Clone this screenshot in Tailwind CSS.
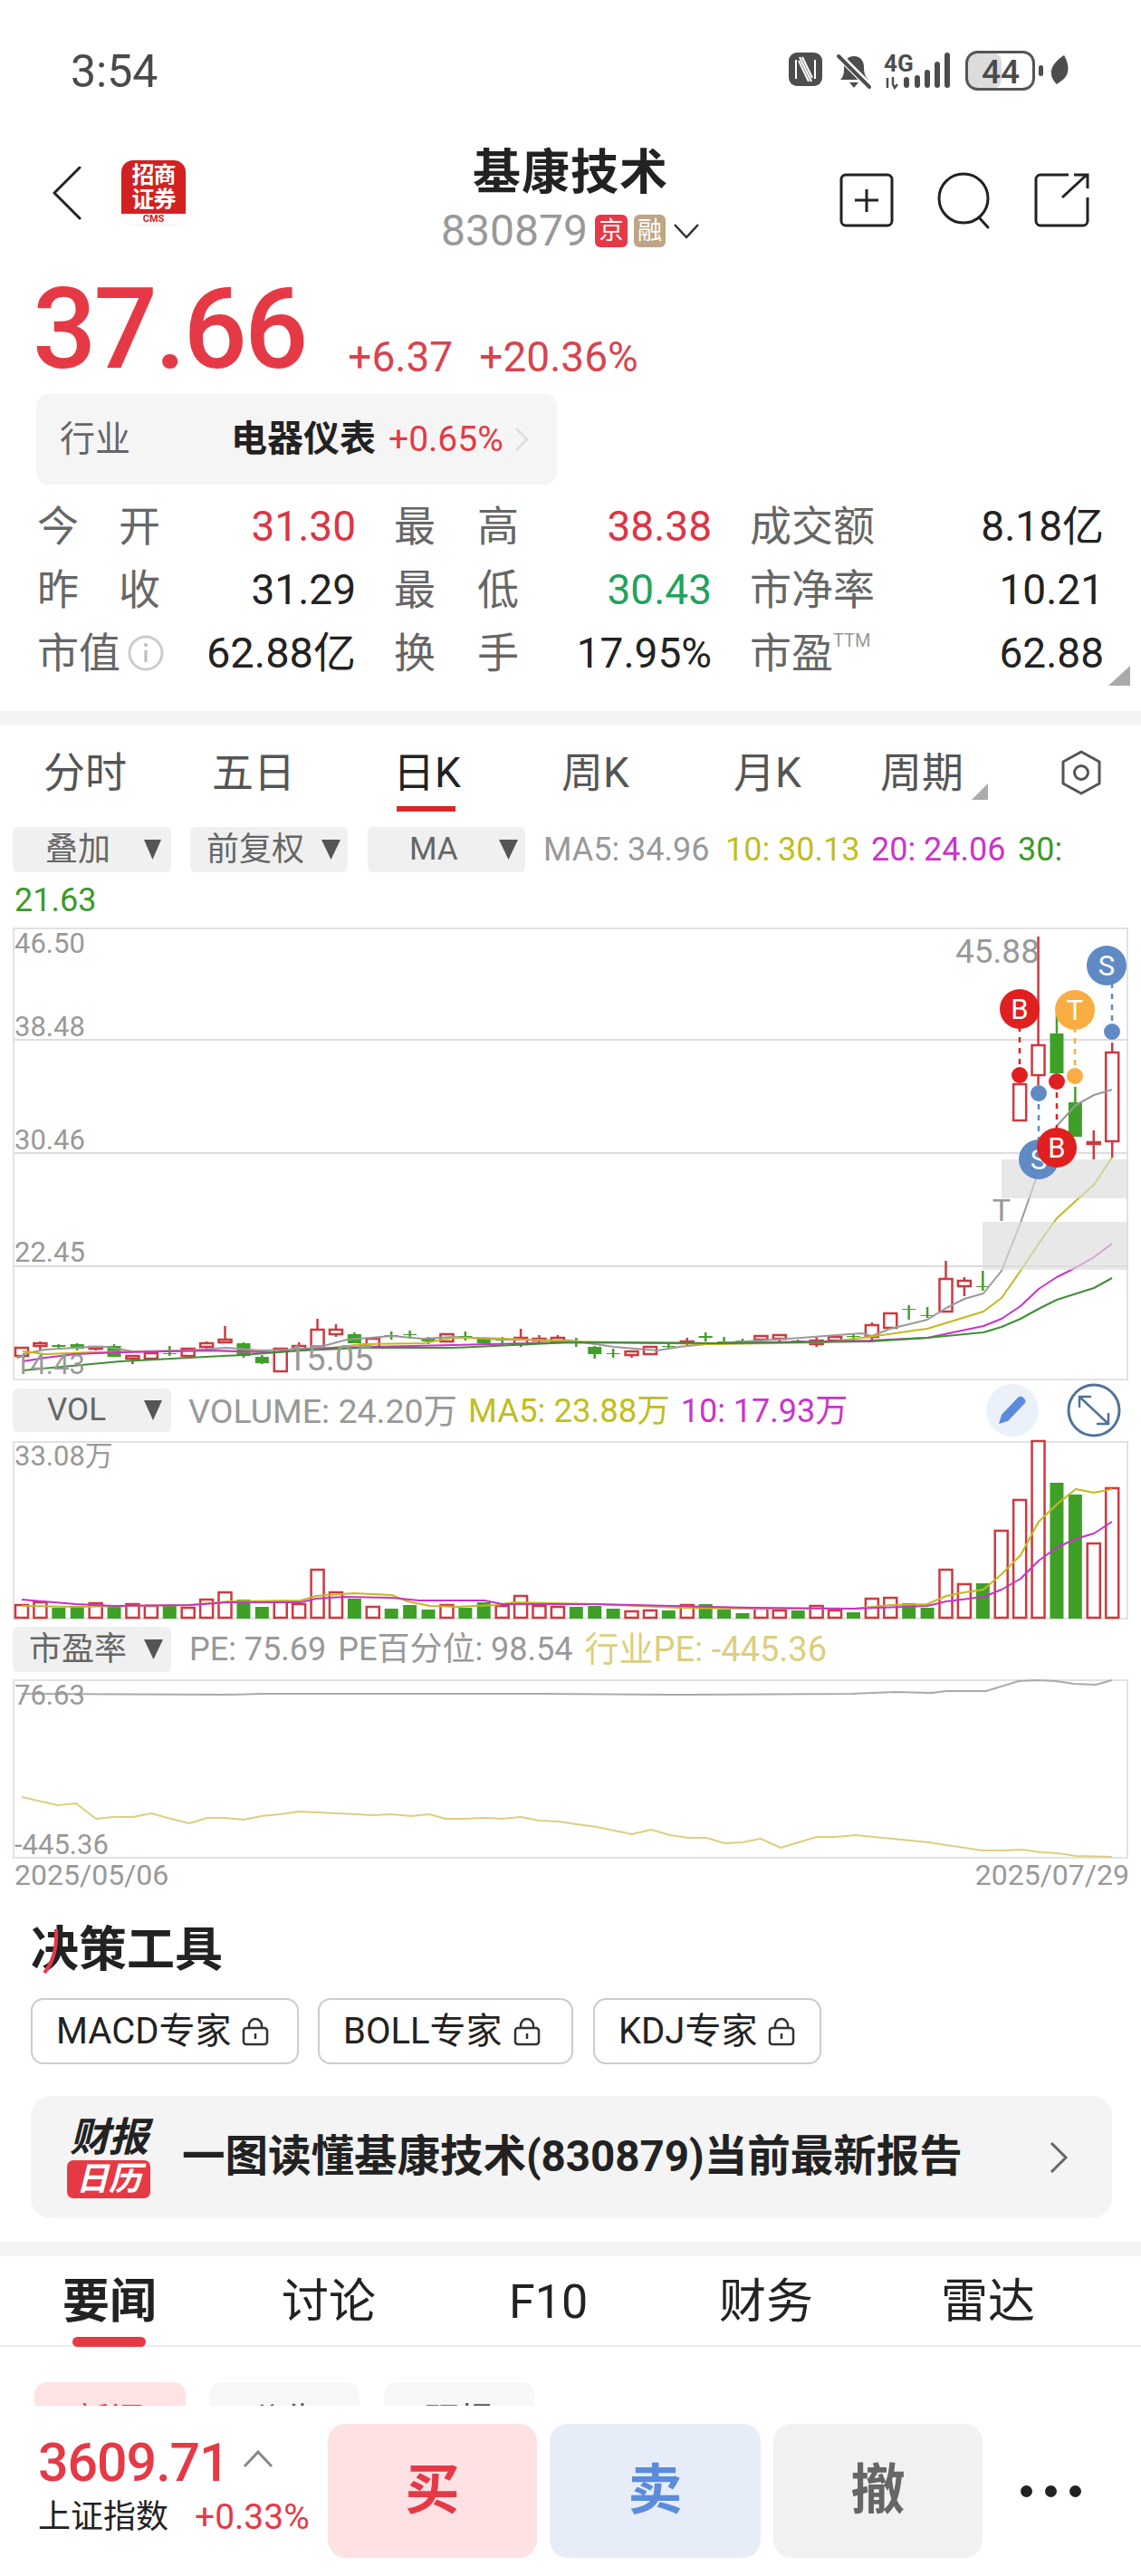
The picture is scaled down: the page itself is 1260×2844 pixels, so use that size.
<!DOCTYPE html>
<html lang="zh-CN">
<head>
  <meta charset="UTF-8" />
  <meta name="viewport" content="width=device-width, initial-scale=1.0">
  <title>基康技术</title>
  <script src="https://cdn.jsdelivr.net/npm/@tailwindcss/browser@4"></script>
</head>
<body class="bg-white">
<div class="w-[1260px] h-[2844px] overflow-hidden bg-white text-[#222] [font-family:Roboto,'Noto_Sans_CJK_SC',sans-serif]">

  <!-- Status bar -->
  <div class="h-[130px] relative">
    <span class="absolute left-[78px] top-[56px] text-[50px] leading-[46px] text-[#4a4a4a]">3:54</span>
    <svg class="absolute left-0 top-0" width="1260" height="130" viewBox="0 0 1260 130">
      <rect x="871" y="58" width="37" height="37" rx="9" fill="#4d4d4d"/>
      <path d="M879 66v21M900 66v21" stroke="#fff" stroke-width="2"/>
      <path d="M883 63l13 27M886 63l11 23M882 67l11 23" fill="none" stroke="#fff" stroke-width="2"/>
      <path d="M928 88c4-4 4-8 4-14 0-8 5-12 11-12s11 4 11 12c0 6 1 10 5 14z" fill="#4d4d4d"/>
      <path d="M938 91h10l-5 6z" fill="#4d4d4d"/>
      <path d="M925 60l36 36" stroke="#fff" stroke-width="8"/>
      <path d="M926 62l34 34" stroke="#4d4d4d" stroke-width="4" stroke-linecap="round"/>
      <text x="976" y="79" font-size="26" font-weight="700" fill="#4d4d4d">4G</text>
      <path d="M980 86v11M986 85v8l2 4 3-4" fill="none" stroke="#4d4d4d" stroke-width="2.5"/>
      <rect x="998" y="85" width="6" height="12" rx="3" fill="#4d4d4d"/>
      <rect x="1010" y="83" width="6" height="14" rx="3" fill="#4d4d4d"/>
      <rect x="1021" y="77" width="6" height="20" rx="3" fill="#4d4d4d"/>
      <rect x="1032" y="68" width="6" height="29" rx="3" fill="#4d4d4d"/>
      <rect x="1043" y="58" width="6" height="39" rx="3" fill="#4d4d4d"/>
      <rect x="1068" y="58" width="38" height="40" rx="10" fill="#dcdcdc"/>
      <rect x="1067.5" y="57.5" width="74" height="41" rx="12" fill="none" stroke="#555" stroke-width="3"/>
      <text x="1105" y="92" text-anchor="middle" font-size="37" font-weight="500" fill="#4a4a4a">44</text>
      <rect x="1147" y="72" width="5" height="12" rx="2.5" fill="#4d4d4d"/>
      <path d="M1175 61c6 10 6 20 0 26l-8 6c-4-4-7-9-6-15 1-7 8-13 14-17z" fill="#4d4d4d"/>
    </svg>
  </div>

  <!-- Stock header -->
  <div class="h-[160px] relative">
    <svg class="absolute left-[58px] top-[53px]" width="34" height="60" viewBox="0 0 34 60">
      <path d="M30 2L2 30l28 28" fill="none" stroke="#222" stroke-width="3" stroke-linecap="round" stroke-linejoin="round"/>
    </svg>
    <div class="absolute left-[133px] top-[46px] w-[73px] h-[73px] rounded-[14px] overflow-hidden border border-[#eee] flex flex-col">
      <div class="h-[61px] bg-[#d32020] text-white font-bold text-[25px] leading-[27px] text-center pt-[3px] tracking-[-1px]">招商<br>证券</div>
      <div class="flex-1 bg-white text-[#c22] font-bold text-[11px] leading-[12px] text-center">CMS</div>
    </div>
    <div class="flex flex-col items-center pt-[34px]">
      <div class="text-[53px] leading-[54px] font-bold text-[#222] tracking-[1px]">基康技术</div>
      <div class="flex items-center mt-[19px] h-[36px]">
        <span class="text-[48px] leading-[36px] text-[#999]">830879</span>
        <span class="ml-[8px] w-[36px] h-[36px] rounded-[6px] bg-[#e63946] text-white text-[27px] leading-[36px] text-center">京</span>
        <span class="ml-[7px] w-[35px] h-[36px] rounded-[6px] bg-[#bda586] text-white text-[27px] leading-[36px] text-center">融</span>
        <svg class="ml-[8px]" width="30" height="18" viewBox="0 0 30 18"><path d="M2 2l13 14L28 2" fill="none" stroke="#333" stroke-width="2.5"/></svg>
      </div>
    </div>
    <svg class="absolute left-[920px] top-[55px]" width="290" height="70" viewBox="920 185 290 70" fill="none" stroke="#222" stroke-width="3">
      <rect x="929" y="193" width="56" height="56" rx="5"/>
      <path d="M957 209v25M944 221h26" stroke-width="3"/>
      <circle cx="1064" cy="219" r="27"/>
      <path d="M1081 240l10 11" stroke-linecap="round"/>
      <path d="M1180 193h-31a5 5 0 0 0-5 5v46a5 5 0 0 0 5 5h47a5 5 0 0 0 5-5v-26"/>
      <path d="M1173 218l27-25M1186 193h15v15" stroke-width="3"/>
    </svg>
  </div>

  <!-- Price -->
  <div class="h-[145px] flex items-end pl-[36px] pb-[23px] text-[#e63946]">
    <span class="text-[124px] leading-[96px] font-medium tracking-[-3px]">37.66</span>
    <span class="text-[46px] leading-[36px] ml-[47px] w-[145px] text-[#d8434e]">+6.37</span>
    <span class="text-[46px] leading-[36px] text-[#d8434e]">+20.36%</span>
  </div>

  <!-- Industry -->
  <div class="ml-[40px] w-[575px] h-[100px] bg-[#f5f5f5] rounded-[14px] flex items-center">
    <span class="ml-[26px] w-[189px] text-[39px] text-[#666]">行业</span>
    <span class="text-[40px] font-bold text-[#222]">电器仪表</span>
    <span class="ml-[14px] text-[39px] text-[#e63946]">+0.65%</span>
    <svg class="ml-[12px]" width="16" height="28" viewBox="0 0 16 28"><path d="M2 2l12 12L2 26" fill="none" stroke="#ddd" stroke-width="2.5"/></svg>
  </div>

  <!-- Stats -->
  <div class="h-[250px] relative pt-[11px] pl-[41px]">
    <div class="grid grid-cols-[352px_351px_391px] gap-x-[42px] auto-rows-[70px] items-center text-[46px] text-[#222]">
      <div class="flex justify-between items-center"><span class="w-[136px] flex justify-between text-[#666]"><span>今</span><span>开</span></span><span class="text-[#dc3545]">31.30</span></div>
      <div class="flex justify-between items-center"><span class="w-[138px] flex justify-between text-[#666]"><span>最</span><span>高</span></span><span class="text-[#dc3545]">38.38</span></div>
      <div class="flex justify-between items-center"><span class="text-[#666]">成交额</span><span>8.18亿</span></div>

      <div class="flex justify-between items-center"><span class="w-[136px] flex justify-between text-[#666]"><span>昨</span><span>收</span></span><span>31.29</span></div>
      <div class="flex justify-between items-center"><span class="w-[138px] flex justify-between text-[#666]"><span>最</span><span>低</span></span><span class="text-[#1fa35c]">30.43</span></div>
      <div class="flex justify-between items-center"><span class="text-[#666]">市净率</span><span>10.21</span></div>

      <div class="flex justify-between items-center">
        <span class="flex items-center text-[#666]">市值
          <svg class="ml-[8px]" width="40" height="40" viewBox="0 0 40 40"><circle cx="20" cy="20" r="18" fill="none" stroke="#ccc" stroke-width="3"/><path d="M20 17v13" stroke="#bbb" stroke-width="3"/><circle cx="20" cy="11" r="2" fill="#bbb"/></svg>
        </span>
        <span class="text-[47px]">62.88亿</span>
      </div>
      <div class="flex justify-between items-center"><span class="w-[138px] flex justify-between text-[#666]"><span>换</span><span>手</span></span><span>17.95%</span></div>
      <div class="flex justify-between items-center"><span class="flex items-start text-[#666]">市盈<span class="text-[20px] leading-[40px] text-[#999]">TTM</span></span><span>62.88</span></div>
    </div>
    <svg class="absolute left-[1224px] top-[200px]" width="24" height="22" viewBox="0 0 24 22"><path d="M24 0v22H0z" fill="#aaa"/></svg>
  </div>

  <div class="h-[16px] bg-[#f3f4f6]"></div>

  <!-- Period tabs -->
  <div class="h-[97px] relative flex items-start pt-[29px] pl-[48px] text-[46px] leading-[46px] text-[#555]">
    <span class="w-[186px]">分时</span>
    <span class="w-[200px]">五日</span>
    <span class="w-[186px] text-[#222]">日K</span>
    <span class="w-[190px]">周K</span>
    <span class="w-[162px]">月K</span>
    <span class="w-[101px]">周期</span>
    <svg class="mt-[35px]" width="18" height="18" viewBox="0 0 18 18"><path d="M18 0v18H0z" fill="#aaa"/></svg>
    <svg class="ml-[80px] -mt-[2px]" width="46" height="50" viewBox="0 0 46 50" fill="none" stroke="#555" stroke-width="3"><path d="M23 2l20 11v24L23 48 3 37V13z" stroke-linejoin="round"/><circle cx="23" cy="25" r="7.5"/></svg>
    <div class="absolute left-[438px] top-[89px] w-[65px] h-[6px] bg-[#dc2626]"></div>
  </div>

  <!-- Main chart controls -->
  <div class="h-[122px] pt-[15px] text-[36px] leading-[50px]">
    <div class="flex items-center h-[50px] pl-[14px]">
      <div class="w-[175px] h-[50px] bg-[#f0f0f0] rounded-[6px] flex items-center pl-[36px] pr-[11px] text-[#666]"><span>叠加</span><svg class="ml-auto" width="19" height="22" viewBox="0 0 19 22"><path d="M0 0h19L9.5 22z" fill="#555"/></svg></div>
      <div class="ml-[21px] w-[174px] h-[50px] bg-[#f0f0f0] rounded-[6px] flex items-center pl-[18px] pr-[8px] text-[#666]"><span>前复权</span><svg class="ml-auto" width="21" height="22" viewBox="0 0 21 22"><path d="M0 0h21L10.5 22z" fill="#555"/></svg></div>
      <div class="ml-[22px] w-[174px] h-[50px] bg-[#f0f0f0] rounded-[6px] flex items-center pl-[46px] pr-[8px] text-[#666]"><span class="text-[35px]">MA</span><svg class="ml-auto" width="21" height="22" viewBox="0 0 21 22"><path d="M0 0h21L10.5 22z" fill="#555"/></svg></div>
      <span class="ml-[20px] w-[201px] text-[#999]">MA5: 34.96</span>
      <span class="w-[161px] text-[#bfbf1f]">10: 30.13</span>
      <span class="w-[162px] text-[#cc33cc]">20: 24.06</span>
      <span class="text-[#3a9a2a]">30:</span>
    </div>
    <div class="pl-[16px] h-[50px] text-[36px] leading-[62px] text-[#3a9a2a]">21.63</div>
  </div>

  <!-- Candlestick chart -->
  <svg id="kline" class="block" width="1260" height="508" viewBox="0 1020 1260 508" font-size="31" fill="#999"></svg>

  <!-- Volume controls -->
  <div class="h-[60px] flex items-center pl-[14px] text-[36px]">
    <div class="w-[175px] h-[48px] -mt-[2px] bg-[#f0f0f0] rounded-[6px] flex items-center pl-[38px] pr-[10px] text-[#666]"><span class="text-[35px]">VOL</span><svg class="ml-auto" width="20" height="22" viewBox="0 0 20 22"><path d="M0 0h20L10 22z" fill="#555"/></svg></div>
    <span class="ml-[19px] text-[#999] text-[37.5px]">VOLUME: 24.20万</span>
    <span class="ml-[12px] text-[36.5px] text-[#bfbf1f]">MA5: 23.88万</span>
    <span class="ml-[12px] text-[#cc33cc]">10: 17.93万</span>
    <svg class="ml-auto -mt-[2px]" width="58" height="58" viewBox="0 0 58 58"><circle cx="29" cy="29" r="29" fill="#ebf1fb"/><path d="M14 44l3-10 18-19c2-2 4-2 6 0l1 1c2 2 2 4 0 6L24 41z" fill="#5b8bdb"/></svg>
    <svg class="ml-[31px] mr-[22px] -mt-[2px]" width="60" height="60" viewBox="0 0 60 60" fill="none" stroke="#4f7399" stroke-width="3"><circle cx="30" cy="30" r="28"/><path d="M14 15l32 30M14 27V15h13M46 33v12H33" stroke-width="2.5"/></svg>
  </div>

  <!-- Volume chart -->
  <svg id="vol" class="block" width="1260" height="204" viewBox="0 1588 1260 204" font-size="31" fill="#999"></svg>

  <!-- PE controls -->
  <div class="h-[60px] pb-[2px] flex items-center pl-[14px] text-[36px]">
    <div class="w-[175px] h-[50px] bg-[#f0f0f0] rounded-[6px] flex items-center pl-[18px] pr-[9px] text-[#666]"><span>市盈率</span><svg class="ml-auto" width="21" height="22" viewBox="0 0 21 22"><path d="M0 0h21L10.5 22z" fill="#555"/></svg></div>
    <span class="ml-[20px] text-[#999]">PE: 75.69</span>
    <span class="ml-[13px] text-[#999]">PE百分位: 98.54</span>
    <span class="ml-[13px] text-[38px] text-[#dccf7f]">行业PE: -445.36</span>
  </div>

  <!-- PE chart -->
  <svg id="pe" class="block" width="1260" height="203" viewBox="0 1852 1260 203" font-size="31" fill="#999"></svg>

  <div class="h-[35px] flex justify-between pl-[16px] pr-[13px] text-[32px] leading-[30px] text-[#999]">
    <span>2025/05/06</span><span>2025/07/29</span>
  </div>

  <!-- Decision tools -->
  <div class="h-[224px] pl-[34px] pt-[38px]">
    <div class="relative w-fit text-[53px] leading-[50px] font-bold text-[#222]">决策工具
      <svg class="absolute left-[8px] top-0" width="30" height="52" viewBox="0 0 30 52"><path d="M20 2c1 20-3 36-13 48" fill="none" stroke="#e63946" stroke-width="4"/></svg>
    </div>
    <div class="flex mt-[28px] text-[40px] text-[#222]">
      <div class="w-[296px] h-[73px] border-2 border-[#ccc] rounded-[14px] flex items-center pl-[26px]">MACD专家<svg class="ml-[12px]" width="30" height="32" viewBox="0 0 30 32" fill="none" stroke="#333" stroke-width="2.5"><rect x="2" y="12" width="26" height="18" rx="3"/><path d="M8 12V9a7 7 0 0 1 14 0v3"/><path d="M15 18v6"/></svg></div>
      <div class="ml-[21px] w-[282px] h-[73px] border-2 border-[#ccc] rounded-[14px] flex items-center pl-[26px]">BOLL专家<svg class="ml-[12px]" width="30" height="32" viewBox="0 0 30 32" fill="none" stroke="#333" stroke-width="2.5"><rect x="2" y="12" width="26" height="18" rx="3"/><path d="M8 12V9a7 7 0 0 1 14 0v3"/><path d="M15 18v6"/></svg></div>
      <div class="ml-[22px] w-[252px] h-[73px] border-2 border-[#ccc] rounded-[14px] flex items-center pl-[26px]">KDJ专家<svg class="ml-[12px]" width="30" height="32" viewBox="0 0 30 32" fill="none" stroke="#333" stroke-width="2.5"><rect x="2" y="12" width="26" height="18" rx="3"/><path d="M8 12V9a7 7 0 0 1 14 0v3"/><path d="M15 18v6"/></svg></div>
    </div>
  </div>

  <!-- Earnings banner -->
  <div class="ml-[34px] w-[1194px] h-[135px] bg-[#f4f4f4] rounded-[22px] flex items-center">
    <div class="ml-[40px] w-[92px] flex flex-col items-center">
      <div class="text-[44px] leading-[46px] font-bold italic text-[#222] tracking-[-1px]">财报</div>
      <div class="mt-[2px] w-[92px] h-[42px] rounded-[7px] bg-[#e63946] text-white text-[36px] leading-[42px] font-bold italic text-center">日历</div>
    </div>
    <span class="ml-[35px] text-[47.5px] font-bold text-[#222]">一图读懂基康技术(830879)当前最新报告</span>
    <svg class="ml-auto mr-[48px]" width="22" height="36" viewBox="0 0 22 36"><path d="M3 2l16 16L3 34" fill="none" stroke="#666" stroke-width="3"/></svg>
  </div>

  <div class="h-[26px]"></div>
  <div class="h-[16px] bg-[#f3f4f6]"></div>

  <!-- News tabs -->
  <div class="h-[100px] relative border-b-2 border-[#eee] text-[52px] leading-[52px] text-[#222]">
    <span class="absolute left-[69px] top-[25px] font-bold">要闻</span>
    <span class="absolute left-[311px] top-[25px]">讨论</span>
    <span class="absolute left-[562px] top-[25px]">F10</span>
    <span class="absolute left-[794px] top-[25px]">财务</span>
    <span class="absolute left-[1039px] top-[25px]">雷达</span>
    <div class="absolute left-[80px] top-[89px] w-[81px] h-[11px] rounded-full bg-[#e63946]"></div>
  </div>

  <!-- News chips, cut off by the trade bar -->
  <div class="h-[65px] overflow-hidden flex items-start pt-[39px] pl-[38px] text-[38px]">
    <div class="w-[167px] h-[72px] rounded-[14px] bg-[#fde3e3] text-[#e63946] text-center leading-[84px]">新闻</div>
    <div class="ml-[26px] w-[166px] h-[72px] rounded-[14px] bg-[#f7f7f7] text-[#555] text-center leading-[84px]">公告</div>
    <div class="ml-[27px] w-[166px] h-[72px] rounded-[14px] bg-[#f7f7f7] text-[#555] text-center leading-[84px]">研报</div>
  </div>

  <!-- Trade bar -->
  <div class="h-[188px] flex items-start pt-[20px]">
    <div class="w-[362px] pl-[42px] pt-[19px]">
      <div class="flex items-center h-[48px]">
        <span class="text-[59px] leading-[48px] font-medium text-[#e63946] tracking-[-1px]">3609.71</span>
        <svg class="ml-[15px] -mt-[8px]" width="34" height="20" viewBox="0 0 34 20"><path d="M2 18L17 2l15 16" fill="none" stroke="#888" stroke-width="3"/></svg>
      </div>
      <div class="flex items-center mt-[17px] text-[36px] leading-[38px]">
        <span>上证指数</span><span class="ml-[29px] text-[39px] text-[#e63946]">+0.33%</span>
      </div>
    </div>
    <div class="w-[231px] h-[148px] rounded-[20px] bg-[#fde1e3] text-[#e63946] text-[60px] font-bold flex items-center justify-center">买</div>
    <div class="ml-[14px] w-[233px] h-[148px] rounded-[20px] bg-[#e6edf9] text-[#5b8bdb] text-[60px] font-bold flex items-center justify-center">卖</div>
    <div class="ml-[14px] w-[231px] h-[148px] rounded-[20px] bg-[#f1f1f1] text-[#666] text-[60px] font-bold flex items-center justify-center">撤</div>
    <div class="ml-[42px] h-[148px] flex items-center gap-[14px]">
      <div class="w-[13px] h-[13px] rounded-full bg-[#222]"></div>
      <div class="w-[13px] h-[13px] rounded-full bg-[#222]"></div>
      <div class="w-[13px] h-[13px] rounded-full bg-[#222]"></div>
    </div>
  </div>
</div>

<script>
  const X = i => 24 + 20.41 * i;
  const RED = '#cc3a3f', GREEN = '#3fa028';

  function poly(pts, color, w) {
    return `<polyline points="${pts.map(p => p.join(',')).join(' ')}" fill="none" stroke="${color}" stroke-width="${w}" stroke-linejoin="round"/>`;
  }
  function frame(x, y, w, h) {
    return `<rect x="${x}" y="${y}" width="${w}" height="${h}" fill="none" stroke="#e2e2e2" stroke-width="2"/>`;
  }
  function label(x, y, t, size) {
    return `<text x="${x}" y="${y}" ${size ? `font-size="${size}"` : ''}>${t}</text>`;
  }

  // [body top, body bottom, wick top, wick bottom, type] in page pixels
  const candles = [
    [1488,1497,1488,1497,'r'],[1483,1486,1481,1492,'r'],[1485,1487,1484,1488,'g'],[1484,1489,1483,1491,'g'],
    [1487,1489,1486,1491,'r'],[1486,1498,1484,1498,'g'],[1497,1500,1497,1506,'r'],[1494,1500,1494,1500,'r'],
    [1494,1495,1486,1497,'g'],[1489,1497,1489,1497,'r'],[1483,1487,1481,1490,'r'],[1479,1482,1464,1482,'r'],
    [1483,1497,1482,1499,'g'],[1498,1505,1496,1506,'g'],[1489,1514,1489,1514,'r'],[1486,1490,1482,1492,'r'],
    [1468,1488,1456,1488,'r'],[1468,1473,1462,1476,'r'],[1473,1483,1471,1483,'g'],[1478,1487,1476,1487,'r'],
    [1474,1475,1470,1479,'g'],[1473,1474,1469,1478,'g'],[1477,1481,1476,1484,'g'],[1473,1481,1473,1481,'r'],
    [1475,1476,1470,1480,'g'],[1478,1483,1477,1485,'g'],[1479,1480,1476,1485,'g'],[1477,1484,1467,1487,'r'],
    [1478,1480,1474,1484,'r'],[1477,1481,1474,1483,'r'],[1481,1482,1477,1487,'g'],[1487,1495,1486,1500,'g'],
    [1494,1495,1489,1499,'g'],[1492,1496,1492,1499,'r'],[1487,1495,1487,1495,'r'],[1486,1487,1484,1489,'g'],
    [1481,1482,1477,1485,'r'],[1475,1477,1471,1481,'g'],[1481,1482,1476,1483,'g'],[1480,1481,1478,1482,'g'],
    [1475,1479,1475,1482,'r'],[1474,1478,1474,1482,'r'],[1480,1482,1479,1483,'g'],[1480,1484,1475,1487,'r'],
    [1476,1480,1475,1482,'r'],[1475,1476,1473,1480,'g'],[1463,1476,1460,1482,'r'],[1450,1466,1449,1466,'r'],
    [1445,1446,1441,1457,'g'],[1452,1453,1443,1455,'g'],[1412,1448,1392,1449,'r'],[1414,1420,1410,1431,'r'],
    [1420,1421,1403,1425,'g'],null,[1197,1237,1197,1238,'r'],[1154,1187,1034,1198,'r'],
    [1141,1185,1120,1185,'g'],[1217,1255,1200,1255,'g'],[1261,1263,1248,1280,'r'],[1162,1260,1151,1278,'r']
  ];

  const ma5 = [[25,1495],[50,1490],[100,1487],[117,1487],[147,1492],[207,1491],[250,1488],[287,1491],[320,1490],[350,1488],[383,1479],[433,1475],[467,1478],[500,1476],[534,1478],[562,1479],[630,1480],[678,1487],[726,1491],[750,1487],[790,1483],[871,1478],[951,1472],[963,1475],[983,1467],[1004,1462],[1024,1457],[1045,1444],[1065,1434],[1086,1428],[1106,1403],[1127,1350],[1147,1293],[1167,1243],[1188,1220],[1208,1209],[1228,1203]];
  const ma10 = [[25,1492],[50,1495],[100,1493],[167,1492],[233,1491],[300,1493],[367,1488],[400,1484],[467,1483],[500,1477],[534,1477],[630,1481],[790,1484],[911,1482],[960,1476],[1024,1467],[1086,1448],[1106,1433],[1127,1403],[1147,1373],[1167,1345],[1190,1324],[1208,1308],[1228,1278]];
  const ma20 = [[25,1503],[50,1499],[83,1495],[133,1493],[233,1491],[300,1493],[367,1488],[500,1485],[630,1482],[790,1483],[960,1480],[1024,1477],[1086,1464],[1106,1456],[1127,1442],[1147,1423],[1167,1410],[1187,1400],[1208,1388],[1228,1373]];
  const ma30 = [[25,1513],[133,1503],[267,1496],[333,1491],[400,1488],[500,1488],[630,1482],[790,1483],[960,1481],[1024,1477],[1086,1471],[1106,1465],[1127,1456],[1147,1445],[1167,1435],[1208,1422],[1228,1411]];

  function marker(x, y, cx, cy, mx, color, t) {
    const dots = `<line x1="${mx}" y1="${y}" x2="${mx}" y2="${cy}" stroke="${color}" stroke-width="2.5" stroke-dasharray="6 6"/>`;
    return dots + `<circle cx="${mx}" cy="${y}" r="9" fill="${color}"/>` +
      `<circle cx="${cx}" cy="${cy}" r="22" fill="${color}"/>` +
      `<text x="${cx}" y="${cy + 11}" text-anchor="middle" font-size="31" fill="#fff">${t}</text>`;
  }

  let k = frame(15, 1025, 1230, 498);
  [1148, 1273, 1398].forEach(y => { k += `<line x1="15" x2="1245" y1="${y}" y2="${y}" stroke="#ddd" stroke-width="2"/>`; });
  candles.forEach((c, i) => {
    if (!c) return;
    const [t, b, wt, wb, type] = c;
    const x = X(i), col = type === 'g' ? GREEN : RED;
    k += `<line x1="${x}" x2="${x}" y1="${wt}" y2="${wb}" stroke="${col}" stroke-width="2.5"/>`;
    k += type === 'g'
      ? `<rect x="${x - 7.5}" y="${t}" width="15" height="${b - t}" fill="${col}"/>`
      : `<rect x="${x - 7}" y="${t}" width="14" height="${b - t}" fill="#fff" stroke="${col}" stroke-width="2.5"/>`;
  });
  k += poly(ma5, '#999', 2) + poly(ma10, '#c4b81f', 2) + poly(ma20, '#c832c8', 2) + poly(ma30, '#3f8f35', 2);
  k += `<rect x="1106" y="1280" width="140" height="43" fill="#dcdcdc" fill-opacity=".65"/>`;
  k += `<rect x="1085" y="1349" width="161" height="53" fill="#dcdcdc" fill-opacity=".65"/>`;
  k += `<text x="1106" y="1348" text-anchor="middle" font-size="34">T</text>`;
  k += label(16, 1052, '46.50') + label(16, 1144, '38.48') + label(16, 1269, '30.46') + label(16, 1393, '22.45') + label(16, 1517, '14.43');
  k += label(317, 1513, '15.05', 38) + label(1055, 1063, '45.88', 37);
  k += marker(1147, 1207, 1147, 1280, 1147, '#5f8ac4', 'S');
  k += marker(1126, 1187, 1126, 1114, 1126, '#e02020', 'B');
  k += marker(1167, 1194, 1167, 1267, 1167, '#e02020', 'B');
  k += marker(1187, 1188, 1187, 1115, 1187, '#f9ad42', 'T');
  k += marker(1228, 1139, 1222, 1066, 1228, '#5f8ac4', 'S');
  document.getElementById('kline').innerHTML = k;

  // bar top y (baseline 1787) and colour per day
  const bars = [
    [1772,'r'],[1769,'r'],[1775,'g'],[1774,'g'],[1770,'r'],[1774,'g'],[1771,'r'],[1773,'r'],[1773,'g'],[1775,'r'],
    [1766,'r'],[1758,'r'],[1766,'g'],[1774,'g'],[1768,'r'],[1771,'r'],[1733,'r'],[1758,'r'],[1765,'g'],[1774,'r'],
    [1776,'g'],[1772,'g'],[1777,'g'],[1772,'r'],[1775,'g'],[1769,'g'],[1773,'r'],[1762,'r'],[1773,'r'],[1774,'r'],
    [1774,'g'],[1773,'g'],[1776,'g'],[1779,'r'],[1778,'r'],[1778,'g'],[1772,'r'],[1771,'g'],[1777,'g'],[1781,'g'],
    [1776,'r'],[1778,'r'],[1778,'g'],[1773,'r'],[1778,'r'],[1780,'g'],[1765,'r'],[1764,'r'],[1770,'g'],[1775,'g'],
    [1733,'r'],[1749,'r'],[1748,'g'],[1690,'r'],[1656,'r'],[1591,'r'],[1637,'g'],[1650,'g'],[1704,'r'],[1643,'r']
  ];
  const volMa5 = [[24,1773],[84,1774],[210,1772],[252,1768],[332,1767],[349,1762],[391,1759],[433,1761],[450,1768],[475,1773],[505,1774],[547,1772],[568,1769],[657,1771],[750,1775],[831,1776],[943,1776],[983,1772],[1024,1771],[1045,1762],[1065,1758],[1086,1755],[1106,1738],[1127,1717],[1147,1680],[1168,1660],[1188,1644],[1208,1648],[1228,1644]];
  const volMa10 = [[24,1766],[84,1771],[126,1773],[210,1772],[252,1769],[332,1769],[349,1765],[379,1763],[433,1764],[463,1767],[535,1767],[555,1771],[657,1771],[831,1775],[943,1776],[1024,1773],[1045,1768],[1086,1763],[1106,1755],[1127,1743],[1147,1723],[1168,1708],[1188,1699],[1208,1693],[1228,1680]];

  let v = frame(15, 1592, 1230, 195);
  bars.forEach(([top, type], i) => {
    const x = X(i);
    v += type === 'g'
      ? `<rect x="${x - 7.5}" y="${top}" width="15" height="${1787 - top}" fill="${GREEN}"/>`
      : `<rect x="${x - 7}" y="${top}" width="14" height="${1787 - top - 1}" fill="#fff" stroke="${RED}" stroke-width="2.5"/>`;
  });
  v += poly(volMa5, '#c4b81f', 2) + poly(volMa10, '#c832c8', 2);
  v += label(16, 1618, '33.08万');
  document.getElementById('vol').innerHTML = v;

  const peGray = [[24,1870],[250,1871],[290,1870],[370,1870],[600,1870],[740,1871],[940,1870],[989,1868],[1029,1869],[1045,1867],[1089,1867],[1125,1856],[1145,1855],[1166,1856],[1186,1859],[1210,1860],[1228,1855]];
  const peYellow = [[24,1984],[64,1993],[84,1991],[106,2008],[125,2006],[147,2006],[167,2002],[189,2008],[209,2013],[229,2007],[249,2007],[269,2009],[289,2005],[309,2003],[330,2000],[350,2001],[371,2002],[394,2003],[412,2004],[432,2003],[454,2005],[474,2003],[492,2008],[514,2008],[535,2007],[555,2008],[575,2006],[595,2010],[617,2011],[637,2014],[659,2017],[678,2021],[698,2025],[719,2020],[740,2026],[760,2029],[780,2029],[800,2035],[820,2034],[840,2030],[862,2040],[882,2034],[902,2028],[923,2028],[945,2026],[965,2028],[985,2030],[1025,2034],[1045,2037],[1085,2043],[1108,2043],[1128,2042],[1150,2045],[1168,2046],[1188,2049],[1228,2050]];
  let p = frame(15, 1855, 1230, 196);
  p += poly(peGray, '#aaa', 2) + poly(peYellow, '#dccf7f', 2);
  p += label(16, 1882, '76.63') + label(16, 2047, '-445.36');
  document.getElementById('pe').innerHTML = p;
</script>
</body>
</html>
